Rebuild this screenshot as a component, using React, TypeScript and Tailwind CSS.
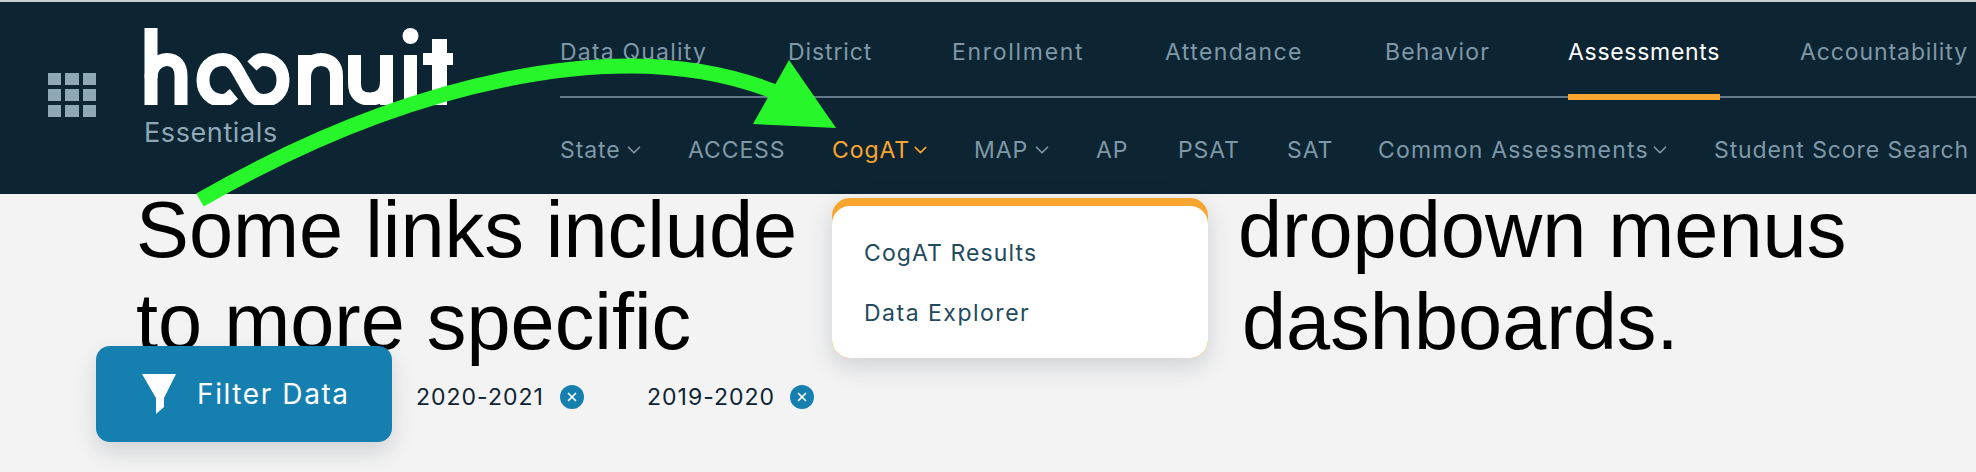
import { ChevronDown, X } from "lucide-react";

const topLinks = [
  { label: "Data Quality", cls: "w-[147px] tracking-[1.2px]" },
  { label: "District", cls: "w-[83px] tracking-[0.9px]" },
  { label: "Enrollment", cls: "w-[132px] tracking-[1.7px]" },
  { label: "Attendance", cls: "w-[139px] tracking-[1.4px]" },
  { label: "Behavior", cls: "w-[102px] tracking-[1.2px]" },
  { label: "Assessments", cls: "w-[151px] tracking-[0.7px] text-white", active: true },
  { label: "Accountability", cls: "w-[170px] tracking-[0.9px]" },
];

const subLinks = [
  { label: "State", cls: "w-[80px]", chevron: true },
  { label: "ACCESS", cls: "w-[96px]" },
  { label: "CogAT", cls: "w-[94px] text-[#f9a631]", chevron: true },
  { label: "MAP", cls: "w-[74px]", chevron: true },
  { label: "AP", cls: "w-[34px]" },
  { label: "PSAT", cls: "w-[61px]" },
  { label: "SAT", cls: "w-[43px]" },
  { label: "Common Assessments", cls: "w-[288px] tracking-[1.2px]", chevron: true },
  { label: "Student Score Search", cls: "w-[254px]" },
];

function HoonuitLogo() {
  return (
    <svg width="310" height="77" viewBox="0 0 310 77" fill="none" stroke="#fff" strokeWidth="13" className="block">
      <path d="M7 0V77" />
      <path d="M7 50C7 38 15 31.5 23 31.5C32 31.5 37 38 37 48V77" />
      <path d="M90 66C85 70 84 72.5 79 72.5C67 72.5 59 64 59 52C59 40 67 31.5 79 31.5C90 31.5 93 42 99 52C105 62 108 72.5 119 72.5C131 72.5 139 64 139 52C139 40 131 31.5 119 31.5C114 31.5 112 34 108 38" />
      <path d="M160.5 27V77M160.5 50C160.5 38 168 31.5 177 31.5C187 31.5 192.5 38 192.5 48V77" />
      <path d="M210.5 27V55C210.5 66 216 71 226 71C236 71 242.5 65 242.5 54V27M242.5 54V77" />
      <path d="M266.5 27V77" />
      <circle cx="266.5" cy="8" r="8" fill="#fff" stroke="none" />
      <path d="M295.5 11V77" strokeWidth="15" />
      <path d="M279 31H309" strokeWidth="12" />
    </svg>
  );
}

function AppGrid() {
  return (
    <div className="grid w-[48px] grid-cols-3 gap-[4px]">
      {Array.from({ length: 9 }).map((_, i) => (
        <div key={i} className="h-[12px] bg-[#8fa8b8]" />
      ))}
    </div>
  );
}

export default function App() {
  return (
    <div className="relative h-[472px] w-[1976px] overflow-hidden bg-[#f3f3f3] font-['Inter',sans-serif]">
      <header className="flex h-[194px] border-t-2 border-[#c9d0d4] bg-[#0d2433]">
        <div className="ml-[48px] mt-[71px] h-fit">
          <AppGrid />
        </div>
        <div className="ml-[48px] mt-[26px] w-[416px]">
          <HoonuitLogo />
          <div className="mt-[13px] text-[27px] leading-[30px] tracking-[0.6px] text-[#8fa8b8]">Essentials</div>
        </div>
        <nav className="min-w-0 flex-1">
          <div className="flex h-[96px] gap-[81px] border-b-2 border-[#63798a] pt-[36px] text-[23px] leading-[28px] text-[#7f98a8]">
            {topLinks.map((link) => (
              <div key={link.label} className={`relative whitespace-nowrap ${link.cls}`}>
                {link.label}
                {link.active && <div className="absolute left-0 -right-[1px] top-[56px] h-[6px] bg-[#f9a631]" />}
              </div>
            ))}
          </div>
          <div className="mt-[38px] flex gap-[48px] text-[23px] leading-[28px] tracking-[0.9px] text-[#7f98a8]">
            {subLinks.map((link) => (
              <div key={link.label} className={`flex items-center justify-between whitespace-nowrap ${link.cls}`}>
                {link.label}
                {link.chevron && <ChevronDown size={22} strokeWidth={1.8} className="-mr-[5px]" />}
              </div>
            ))}
          </div>
        </nav>
      </header>

      <main className="-mt-[10px] pl-[136px] font-['Liberation_Sans',sans-serif] text-[79.3px] leading-[92px] text-black">
        <div className="flex">
          <div className="w-[1102px] whitespace-nowrap">Some links include</div>
          <div className="whitespace-nowrap">dropdown menus</div>
        </div>
        <div className="flex">
          <div className="w-[1106px] whitespace-nowrap">to more specific</div>
          <div className="whitespace-nowrap">dashboards.</div>
        </div>
      </main>

      <div className="absolute left-[96px] top-[346px] flex items-center">
        <button className="flex h-[96px] w-[296px] items-center rounded-[14px] bg-[#1580b0] pl-[46px] text-[28px] tracking-[1.6px] text-white shadow-[0_10px_22px_rgba(40,50,70,0.16)]">
          <svg width="34" height="40" viewBox="0 0 34 40" className="mr-[21px]">
            <path d="M0 0H34L22 24V33L14 40V24Z" fill="#fff" />
          </svg>
          Filter Data
        </button>
        <div className="ml-[24px] mt-[6px] flex w-[168px] items-center justify-between text-[23px] tracking-[1px] text-[#0d2433]">
          2020-2021
          <span className="flex h-[24px] w-[24px] items-center justify-center rounded-full bg-[#1580b0] text-white">
            <X size={14} strokeWidth={3} />
          </span>
        </div>
        <div className="ml-[63px] mt-[6px] flex w-[167px] items-center justify-between text-[23px] tracking-[1px] text-[#0d2433]">
          2019-2020
          <span className="flex h-[24px] w-[24px] items-center justify-center rounded-full bg-[#1580b0] text-white">
            <X size={14} strokeWidth={3} />
          </span>
        </div>
      </div>

      <div className="absolute left-[832px] top-[198px] h-[160px] w-[376px] overflow-hidden rounded-[18px] bg-[#f9a631] shadow-[0_8px_24px_rgba(40,50,70,0.18)]">
        <div className="mt-[8px] flex h-[152px] flex-col gap-[34px] rounded-[18px] bg-white pl-[32px] pt-[34px] text-[23px] leading-[26px] text-[#234a5c]">
          <div className="tracking-[1.1px]">CogAT Results</div>
          <div className="tracking-[1.5px]">Data Explorer</div>
        </div>
      </div>

      <svg className="pointer-events-none absolute left-0 top-0" width="1976" height="472" fill="none">
        <path d="M200 200C400 85 620 30 775 92" stroke="#27f72a" strokeWidth="15" />
        <path d="M789 60L753 124L836 128Z" fill="#27f72a" />
      </svg>
    </div>
  );
}
